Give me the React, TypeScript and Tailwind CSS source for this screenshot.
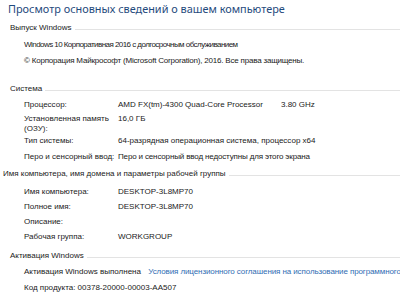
import React from "react";

const BODY = "text-[8px]";

function Section({ title, className = "", pl = "pl-[10px]" }: { title: string; className?: string; pl?: string }) {
  return (
    <div className={`flex items-center ${pl} h-[16px] ${className}`}>
      <span className={`${BODY} leading-[16px] text-[#222] whitespace-nowrap`}>{title}</span>
      <div className="flex-1 h-px bg-[#e3e3e3] ml-[3px] mt-[2px]" />
    </div>
  );
}

function Row({ label, value, extra, h = "h-[15px] leading-[15px]" }: { label: React.ReactNode; value?: React.ReactNode; extra?: string; h?: string }) {
  return (
    <div className={`flex items-start pl-[24px] ${BODY} text-[#1a1a1a] ${h}`}>
      <div className="w-[94px] shrink-0 whitespace-nowrap">{label}</div>
      <div className="w-[163px] shrink-0 whitespace-nowrap">{value}</div>
      {extra && <div className="whitespace-nowrap">{extra}</div>}
    </div>
  );
}

export default function App() {
  return (
    <div
      className="w-[400px] h-[300px] overflow-hidden bg-white"
      style={{ fontFamily: '"Liberation Sans", Arial, sans-serif' }}
    >
      <div
        className="pl-[8px] h-[18px] text-[10.9px] leading-[18px] text-[#1f4a7d] whitespace-nowrap"
        style={{ fontFamily: '"Noto Sans", sans-serif' }}
      >
        Просмотр основных сведений о вашем компьютере
      </div>
      <Section title="Выпуск Windows" className="mt-[2px]" />
      <div className={`pl-[24px] ${BODY} text-[#1a1a1a] whitespace-nowrap leading-[16px] mt-[1px]`}>
        <div className="h-[16px] tracking-[-0.55px]">Windows 10 Корпоративная 2016 с долгосрочным обслуживанием</div>
        <div className="h-[16px] tracking-[-0.2px]">© Корпорация Майкрософт (Microsoft Corporation), 2016. Все права защищены.</div>
      </div>
      <Section title="Система" className="mt-[12px]" />
      <div>
        <Row label="Процессор:" value="AMD FX(tm)-4300 Quad-Core Processor" extra="3.80 GHz" h="h-[16px] leading-[16px]" />
        <Row label={<div className="leading-[10px] pt-[1px]">Установленная память<br />(ОЗУ):</div>} value={<div className="leading-[10px] pt-[1px]">16,0 ГБ</div>} h="h-[20px]" />
        <Row label="Тип системы:" value="64-разрядная операционная система, процессор x64" h="h-[16px] leading-[16px]" />
        <Row label="Перо и сенсорный ввод:" value={<span className="tracking-[-0.15px]">Перо и сенсорный ввод недоступны для этого экрана</span>} h="h-[16px] leading-[16px]" />
      </div>
      <Section title="Имя компьютера, имя домена и параметры рабочей группы" pl="pl-[3px]" className="mt-[1px]" />
      <div className="mt-[2px]">
        <Row label="Имя компьютера:" value="DESKTOP-3L8MP70" />
        <Row label="Полное имя:" value="DESKTOP-3L8MP70" />
        <Row label="Описание:" />
        <Row label="Рабочая группа:" value="WORKGROUP" />
      </div>
      <Section title="Активация Windows" className="mt-[4px]" />
      <div className={`pl-[24px] ${BODY} text-[#1a1a1a] whitespace-nowrap leading-[16px]`}>
        <div className="h-[16px]">
          Активация Windows выполнена{" "}
          <span className="text-[#2f6db3] ml-[5px] tracking-[-0.1px]">Условия лицензионного соглашения на использование программного обеспечения</span>
        </div>
        <div className="h-[16px]">Код продукта: 00378-20000-00003-AA507</div>
      </div>
    </div>
  );
}
